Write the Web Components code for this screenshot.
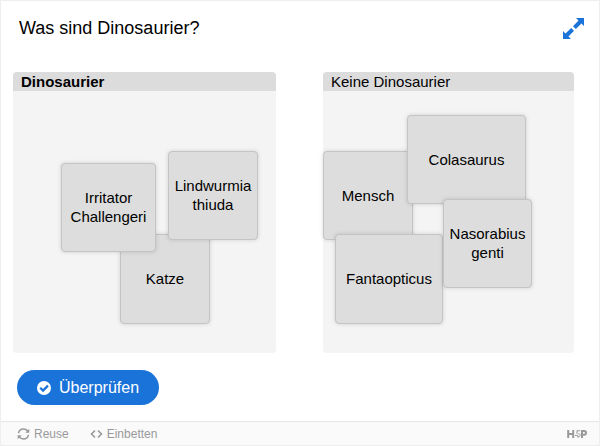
<!DOCTYPE html>
<html lang="de">
<head>
<meta charset="utf-8">
<meta name="viewport" content="width=device-width, initial-scale=1">
<title>Was sind Dinosaurier?</title>
<style>
  html, body { height: 100%; }
  body { margin: 0; background: #fff; color: #000; font-family: "Liberation Sans", Arial, sans-serif; }
</style>
</head>
<body>
<quiz-frame>
  <quiz-header slot="header">Was sind Dinosaurier?</quiz-header>
  <drop-board>
    <drop-zone style="flex-grow: 263">
      <b slot="label">Dinosaurier</b>
      <drag-card style="left: 107px; top: 162px; width: 90px; height: 90px">Katze</drag-card>
      <drag-card style="left: 48px; top: 91px; width: 95px; height: 89px">Irritator Challengeri</drag-card>
      <drag-card style="left: 155px; top: 79px; width: 90px; height: 89px">Lindwurmia thiuda</drag-card>
    </drop-zone>
    <drop-zone style="flex-grow: 251">
      <span slot="label">Keine Dinosaurier</span>
      <drag-card style="left: 0; top: 79px; width: 90px; height: 89px">Mensch</drag-card>
      <drag-card style="left: 84px; top: 43px; width: 119px; height: 89px">Colasaurus</drag-card>
      <drag-card style="left: 12px; top: 162px; width: 108px; height: 90px">Fantaopticus</drag-card>
      <drag-card style="left: 120px; top: 127px; width: 89px; height: 89px">Nasorabius genti</drag-card>
    </drop-zone>
  </drop-board>
  <check-button>Überprüfen</check-button>
  <quiz-footer slot="footer"></quiz-footer>
</quiz-frame>

<script>
const define = (name, html) => {
  const template = document.createElement('template');
  template.innerHTML = html;
  customElements.define(name, class extends HTMLElement {
    constructor() {
      super();
      this.attachShadow({ mode: 'open' }).append(template.content.cloneNode(true));
    }
  });
};

define('quiz-frame', `
  <style>
    :host { display: flex; flex-direction: column; box-sizing: border-box; min-height: 100%; border: 1px solid #eee; }
    main { flex: 1; padding: 0 12px 16px; }
  </style>
  <slot name="header"></slot>
  <main><slot></slot></main>
  <slot name="footer"></slot>`);

define('quiz-header', `
  <style>
    :host { display: flex; align-items: center; justify-content: space-between; padding: 14px 14px 30px 18px; }
    h1 { margin: 0; font-size: 18px; line-height: 27px; font-weight: 400; }
    button { display: block; padding: 0; border: 0; background: none; color: #1a73d9; cursor: pointer; }
    svg { display: block; width: 23px; height: 23px; }
  </style>
  <h1><slot></slot></h1>
  <button type="button" aria-label="Vollbild">
    <svg viewBox="0 0 23 23" fill="currentColor" aria-hidden="true">
      <path d="M14 1h8v8l-2.500-2.500-5.700 5.500-2.800-2.800 5.500-5.700z"/>
      <path d="M9 22H1v-8l2.500 2.500L9.200 11l2.800 2.800-5.500 5.700z"/>
      <path d="M9.300 9.300l4.400 4.400" stroke="#fff" stroke-width="1.500"/>
    </svg>
  </button>`);

define('drop-board', `
  <style>
    :host { display: flex; gap: 47px; padding-right: 13px; }
  </style>
  <slot></slot>`);

define('drop-zone', `
  <style>
    :host { display: block; position: relative; flex: 1 1 0; min-width: 0; min-height: 281px; background: #f4f4f4; border-radius: 4px; }
    header { padding: 0 8px; background: #dcdcdc; border-radius: 4px 4px 0 0; font-size: 15px; line-height: 19px; }
  </style>
  <header><slot name="label"></slot></header>
  <slot></slot>`);

define('drag-card', `
  <style>
    :host { display: block; position: absolute; }
    button { display: block; box-sizing: border-box; width: 100%; height: 100%; padding: 0 4px 1px; border: 1px solid #c4c4c4; border-radius: 4px;
      background: #ddd; color: #000; font: 15px/19px "Liberation Sans", Arial, sans-serif; text-align: center; box-shadow: 0 0 4px rgba(0, 0, 0, .15); cursor: grab; }
  </style>
  <button type="button"><slot></slot></button>`);

define('check-button', `
  <style>
    :host { display: block; padding: 17px 4px 0; }
    button { display: flex; align-items: center; gap: 8px; height: 35px; padding: 0 20px; border: 0; border-radius: 18px;
      background: #1a73d9; color: #fff; font: 16px/20px "Liberation Sans", Arial, sans-serif; cursor: pointer; }
    svg { width: 14px; height: 14px; }
  </style>
  <button type="button">
    <svg viewBox="0 0 14 14" aria-hidden="true"><circle cx="7" cy="7" r="7" fill="#fff"/><path d="M3.200 6.800l2.800 2.800 5-5" fill="none" stroke="#1a73d9" stroke-width="2.200"/></svg>
    <slot></slot>
  </button>`);

define('quiz-footer', `
  <style>
    :host { display: flex; align-items: center; gap: 21px; padding: 0 12px 0 16px; height: 23px; border-top: 1px solid #e6e6e6; background: #fafafa; color: #999; }
    button { display: flex; align-items: center; gap: 4px; padding: 0; border: 0; background: none; color: inherit;
      font: 12px/16px "Liberation Sans", Arial, sans-serif; cursor: pointer; }
    a { display: block; margin-left: auto; color: #999; }
    svg { display: block; }
  </style>
  <button type="button">
    <svg width="13" height="12" viewBox="0 0 13 12" fill="none" stroke="currentColor" stroke-width="1.500" aria-hidden="true">
      <path d="M1.500 5.200C2 2.600 4 1 6.500 1c1.900 0 3.200.8 4.300 2.200M11.500 6.800C11 9.400 9 11 6.500 11c-1.900 0-3.200-.8-4.300-2.200"/>
      <path d="M12.300.8v4H8.300zM.7 11.200v-4h4z" fill="currentColor" stroke="none"/>
    </svg>Reuse</button>
  <button type="button">
    <svg width="13" height="12" viewBox="0 0 13 12" fill="none" stroke="currentColor" stroke-width="1.600" aria-hidden="true">
      <path d="M5 2.500L1.500 6 5 9.500M8 2.500L11.500 6 8 9.500"/>
    </svg>Einbetten</button>
  <a href="#" aria-label="H5P">
    <svg width="20" height="10" viewBox="0 0 20 10" fill="none" stroke="currentColor" aria-hidden="true">
      <path d="M1.200 1v8M6.200 1v8M1.200 5h5" stroke-width="2"/>
      <path d="M13.200 1.800h-3L9.700 4.500M8 6.500h2.200l1.200 1.500" stroke-width="1.100"/>
      <path d="M10.500 4.800c2-.4 2.800.4 2.600 1.600s-1.300 1.900-2.600 1.700" stroke-width="1"/>
      <path d="M15 9V2h2.200c2.400 0 2.400 3.700 0 3.700H15" stroke-width="2"/>
    </svg>
  </a>`);
</script>
</body>
</html>
